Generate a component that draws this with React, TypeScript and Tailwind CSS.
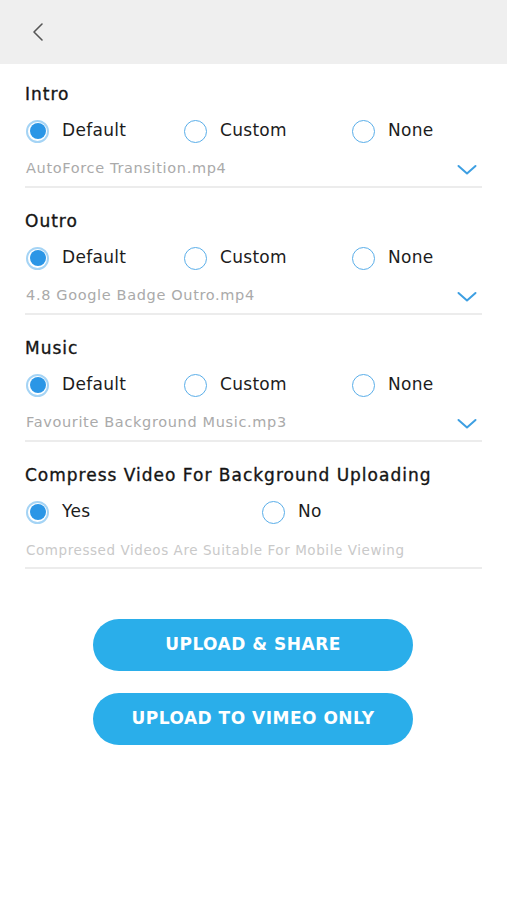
import React from "react";

const font = { fontFamily: '"DejaVu Sans", "Open Sans", sans-serif' };

function Radio({ checked, label, w }: { checked: boolean; label: string; w: string }) {
  return (
    <div className={`flex items-center ${w}`}>
      {checked ? (
        <div className="w-[23px] h-[23px] rounded-full border-2 border-[#a5d4f5] flex items-center justify-center shrink-0">
          <div className="w-[16px] h-[16px] rounded-full bg-[#2b96e6]" />
        </div>
      ) : (
        <div className="w-[23px] h-[23px] rounded-full border-[1.5px] border-[#5aaee9] shrink-0" />
      )}
      <span className="ml-[13px] text-[17px] tracking-[0.3px] text-[#1c1c1c]">{label}</span>
    </div>
  );
}

function Chevron() {
  return (
    <svg width="20" height="12" viewBox="0 0 20 12" fill="none">
      <path d="M1.5 2 L10 9.5 L18.5 2" stroke="#3d9fe2" strokeWidth="2" strokeLinecap="round" strokeLinejoin="round" />
    </svg>
  );
}

function Section({ title, file }: { title: string; file: string }) {
  return (
    <div className="mt-[22px] first:mt-0">
      <div className="h-6 flex items-center text-[17px] tracking-[1px] text-[#151515] [-webkit-text-stroke:0.35px_#151515]">{title}</div>
      <div className="mt-[9px] h-[30px] flex items-center pl-px">
        <Radio checked label="Default" w="w-[158px]" />
        <Radio checked={false} label="Custom" w="w-[168px]" />
        <Radio checked={false} label="None" w="w-[120px]" />
      </div>
      <div className="mt-[11px] h-6 flex items-center justify-between">
        <span className="text-[14.5px] tracking-[0.65px] text-[#aaaaaa] pl-px">{file}</span>
        <span className="mr-[5px] mt-[2px]"><Chevron /></span>
      </div>
      <div className="mt-[5px] h-[2px] bg-[#ececec]" />
    </div>
  );
}

export default function App() {
  return (
    <div className="w-[507px] h-[900px] bg-white" style={font}>
      <div className="h-16 bg-[#efefef] flex items-center pl-[31px]">
        <svg width="14" height="20" viewBox="0 0 14 20" fill="none">
          <path d="M11 2 L3 10 L11 18" stroke="#555" strokeWidth="1.6" strokeLinecap="round" strokeLinejoin="round" />
        </svg>
      </div>
      <div className="px-[25px] pt-[19px]">
        <Section title="Intro" file="AutoForce Transition.mp4" />
        <Section title="Outro" file="4.8 Google Badge Outro.mp4" />
        <Section title="Music" file="Favourite Background Music.mp3" />
        <div className="mt-[22px]">
          <div className="h-6 flex items-center text-[17px] tracking-[1px] text-[#151515] [-webkit-text-stroke:0.35px_#151515]">
            Compress Video For Background Uploading
          </div>
          <div className="mt-[9px] h-[30px] flex items-center pl-px">
            <Radio checked label="Yes" w="w-[236px]" />
            <Radio checked={false} label="No" w="w-[120px]" />
          </div>
          <div className="mt-[11px] h-6 flex items-center">
            <span className="text-[13.5px] tracking-[0.57px] text-[#c9c9c9] pl-px">Compressed Videos Are Suitable For Mobile Viewing</span>
          </div>
          <div className="mt-[5px] h-[2px] bg-[#ececec]" />
        </div>
      </div>
      <div className="mt-[50px] flex flex-col items-center gap-[22px] pr-px">
        <button className="w-[320px] h-[52px] rounded-full bg-[#2aaeea] text-white text-[17px] font-bold tracking-[0.5px]">
          UPLOAD &amp; SHARE
        </button>
        <button className="w-[320px] h-[52px] rounded-full bg-[#2aaeea] text-white text-[17px] font-bold tracking-[0.5px]">
          UPLOAD TO VIMEO ONLY
        </button>
      </div>
    </div>
  );
}
